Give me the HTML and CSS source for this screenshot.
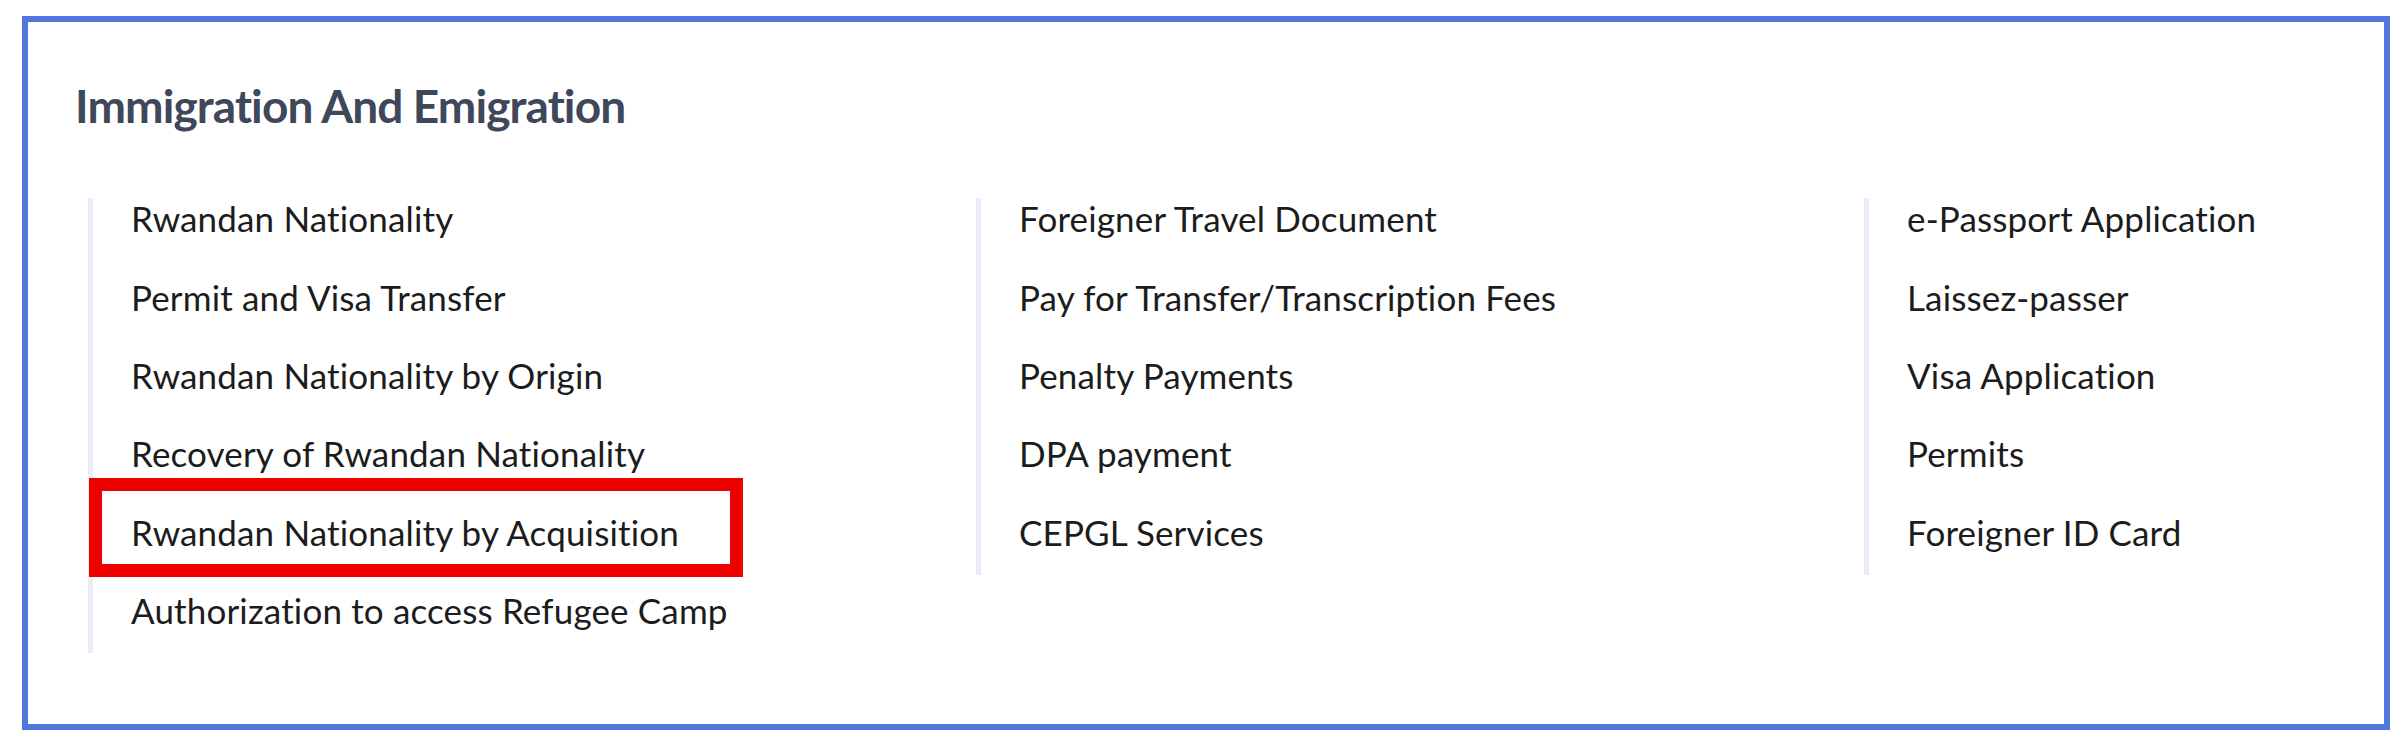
FILE: index.html
```html
<!DOCTYPE html>
<html lang="en">
<head>
    <meta charset="UTF-8">
    <meta name="viewport" content="width=device-width, initial-scale=1.0">
    <title>Immigration And Emigration</title>
    <link rel="stylesheet" href="styles.css">
</head>
<body>
    <div class="services-card">
        <h2 class="services-title">Immigration And Emigration</h2>

        <div class="services-grid">
            <ul class="service-list">
                <li>Rwandan Nationality</li>
                <li>Permit and Visa Transfer</li>
                <li>Rwandan Nationality by Origin</li>
                <li>Recovery of Rwandan Nationality</li>
                <li class="highlight">Rwandan Nationality by Acquisition</li>
                <li>Authorization to access Refugee Camp</li>
            </ul>

            <ul class="service-list">
                <li>Foreigner Travel Document</li>
                <li>Pay for Transfer/Transcription Fees</li>
                <li>Penalty Payments</li>
                <li>DPA payment</li>
                <li>CEPGL Services</li>
            </ul>

            <ul class="service-list">
                <li>e-Passport Application</li>
                <li>Laissez-passer</li>
                <li>Visa Application</li>
                <li>Permits</li>
                <li>Foreigner ID Card</li>
            </ul>
        </div>
    </div>
</body>
</html>
```

FILE: styles.css
```css
body {
    margin: 0;
    padding: 16px 10px 20px 22px;
    background: #fff;
    font-family: Lato, 'Noto Sans', sans-serif;
}

.services-card {
    box-sizing: border-box;
    height: 714px;
    border: 6px solid #5078dc;
    padding: 56px 48px 0 47px;
}

.services-title {
    margin: 0 0 65px 0;
    font-size: 46px;
    line-height: 1.2;
    font-weight: 700;
    letter-spacing: -0.9px;
    color: #3f475b;
}

.services-grid {
    display: grid;
    grid-template-columns: 888px 888px 1fr;
    margin-left: 13px;
    align-items: start;
}

.service-list {
    list-style: none;
    margin: 0;
    padding: 0 0 22px 38px;
    border-left: 5px solid #e9edfa;
    display: flex;
    flex-direction: column;
    gap: 37.4px;
}

.service-list li {
    font-size: 35px;
    line-height: 41px;
    letter-spacing: 0.15px;
    color: #1c1c1c;
    white-space: nowrap;
}

/* red annotation frame */
.service-list li.highlight {
    position: relative;
}

.service-list li.highlight::after {
    content: '';
    position: absolute;
    top: -34px;
    left: -42px;
    width: 654px;
    height: 99px;
    box-sizing: border-box;
    border: 13px solid #ef0000;
}
```
